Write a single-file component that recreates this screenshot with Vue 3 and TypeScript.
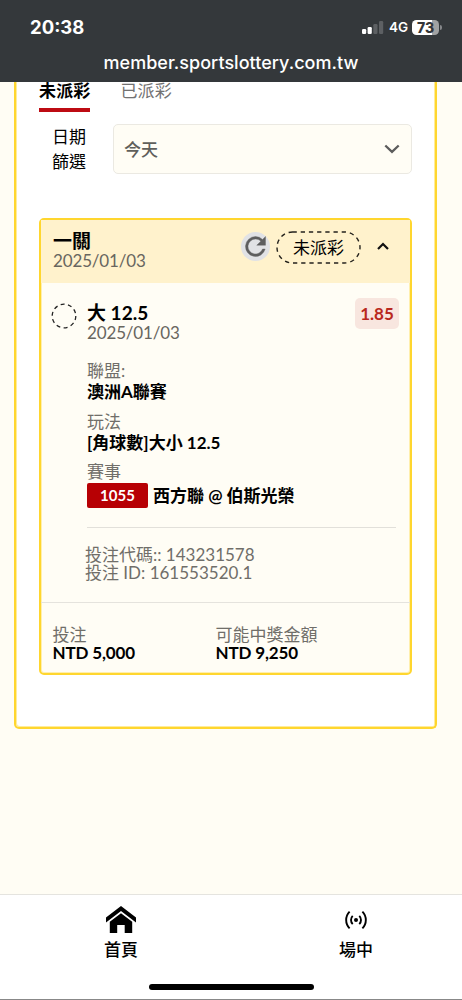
<script setup lang="ts">
interface Field {
  label: string
  value: string
  tag?: string
}

const tabs = ['未派彩', '已派彩']
const fields: Field[] = [
  { label: '聯盟:', value: '澳洲A聯賽' },
  { label: '玩法', value: '[角球數]大小 12.5' },
  { label: '賽事', value: '西方聯 @ 伯斯光榮', tag: '1055' },
]
const totals: Field[] = [
  { label: '投注', value: 'NTD 5,000' },
  { label: '可能中獎金額', value: 'NTD 9,250' },
]
</script>

<template>
  <div class="screen">
    <header class="browser">
      <div class="status">
        <span class="clock">20:38</span>
        <div class="indicators">
          <svg class="signal" width="22" height="13" viewBox="0 0 22 13">
            <rect x="0" y="8" width="4.2" height="5" rx="1.2" fill="#fff" />
            <rect x="5.6" y="6" width="4.2" height="7" rx="1.2" fill="#fff" />
            <rect x="11.3" y="3" width="4.2" height="10" rx="1.2" fill="#5d6063" />
            <rect x="17" y="0" width="4.2" height="13" rx="1.2" fill="#5d6063" />
          </svg>
          <span class="network">4G</span>
          <div class="battery"><span>73</span></div>
          <i class="battery-tip"></i>
        </div>
      </div>
      <div class="address">member.sportslottery.com.tw</div>
    </header>

    <main class="page">
      <section class="panel">
        <nav class="tabs">
          <span v-for="(tab, i) in tabs" :key="tab" class="tab" :class="{ active: i === 0 }">{{ tab }}</span>
        </nav>

        <div class="filter">
          <label class="filter-label">日期<br />篩選</label>
          <div class="select">
            <span>今天</span>
            <svg width="16" height="10" viewBox="0 0 16 10">
              <path d="M1.3 1.5 8 7.9l6.7-6.4" fill="none" stroke="#5c5c5c" stroke-width="2.3" />
            </svg>
          </div>
        </div>

        <article class="ticket">
          <div class="ticket-head">
            <div class="ticket-name">
              <strong>一關</strong>
              <span>2025/01/03</span>
            </div>
            <div class="refresh">
              <svg width="29" height="29" viewBox="0.4 0.4 23.2 23.2">
                <path d="M17.65 6.35A7.96 7.96 0 0 0 12 4a8 8 0 1 0 7.73 10h-2.08A6 6 0 1 1 12 6c1.66 0 3.14.69 4.22 1.78L13 11h7V4z" fill="#5e5e5f" stroke="#5e5e5f" stroke-width=".3" />
              </svg>
            </div>
            <div class="pill">
              <svg width="85" height="33" viewBox="0 0 85 33">
                <rect x="1" y="1" width="83" height="31" rx="15.5" fill="none" stroke="#24221c" stroke-width="1.4" stroke-dasharray="4.3 3.9" />
              </svg>
              <span>未派彩</span>
            </div>
            <svg class="collapse" width="12" height="8" viewBox="0 0 12 8">
              <path d="M1 7 6 2l5 5" fill="none" stroke="#111" stroke-width="2.2" />
            </svg>
          </div>

          <div class="bet">
            <svg class="pending" width="26" height="26" viewBox="0 0 26 26">
              <circle cx="13" cy="13" r="11.8" fill="none" stroke="#222" stroke-width="1.3" stroke-dasharray="4 3.41" />
            </svg>
            <div class="bet-body">
              <div class="bet-top">
                <div class="selection">
                  <strong>大 12.5</strong>
                  <span>2025/01/03</span>
                </div>
                <span class="odds">1.85</span>
              </div>
              <dl class="fields">
                <div v-for="field in fields" :key="field.label" class="field">
                  <dt>{{ field.label }}</dt>
                  <dd :class="{ tagged: field.tag }"><span v-if="field.tag" class="tag">{{ field.tag }}</span>{{ field.value }}</dd>
                </div>
              </dl>
              <div class="codes">
                <div>投注代碼:: 143231578</div>
                <div>投注 ID: 161553520.1</div>
              </div>
            </div>
          </div>

          <footer class="totals">
            <div v-for="total in totals" :key="total.label" class="total">
              <span>{{ total.label }}</span>
              <strong>{{ total.value }}</strong>
            </div>
          </footer>
        </article>
      </section>
    </main>

    <nav class="dock">
      <div class="dock-items">
        <div class="dock-item">
          <svg width="32" height="28" viewBox="0 0 32 28">
            <path d="M1 11.5 16 0l15 11.5v5L16 5 1 16.5z" fill="#000" />
            <path d="M4.8 15.8 16 7.3l11.2 8.5V27h-7.5v-8h-7.5v8H4.8z" fill="#000" />
          </svg>
          <span>首頁</span>
        </div>
        <div class="dock-item">
          <svg width="24" height="28" viewBox="0 0 24 28">
            <circle cx="12" cy="14" r="2" />
            <path d="M8.7 9.9a5.8 5.8 0 0 0 0 8.2M15.3 9.9a5.8 5.8 0 0 1 0 8.2M5.6 5.6a12 12 0 0 0 0 16.8M18.4 5.6a12 12 0 0 1 0 16.8" fill="none" stroke="#000" stroke-width="1.9" />
          </svg>
          <span>場中</span>
        </div>
      </div>
      <div class="home-bar"></div>
    </nav>
  </div>
</template>

<style>
body {
  margin: 0;
}
</style>

<style scoped>
.screen {
  box-sizing: border-box;
  width: 462px;
  height: 1000px;
  display: flex;
  flex-direction: column;
  overflow: hidden;
  background: #fffdf4;
  font-family: Lato, "Noto Sans CJK TC", sans-serif;
  font-size: 17px;
  color: #000;
}
.screen * {
  box-sizing: border-box;
}
svg {
  display: block;
  flex: none;
}

.browser {
  flex: none;
  height: 82px;
  background: #34383b;
  color: #fff;
  font-family: Inter, sans-serif;
}
.status {
  display: flex;
  justify-content: space-between;
  height: 51px;
  padding: 16px 20px 0 30px;
}
.clock {
  font-size: 18.5px;
  line-height: 22px;
  font-weight: 700;
}
.indicators {
  display: flex;
  height: 22px;
  align-items: center;
}
.network {
  margin-left: 5px;
  width: 20px;
  font-size: 13.5px;
  font-weight: 600;
}
.battery {
  margin-left: 3px;
  width: 27px;
  height: 15px;
  border-radius: 4.5px;
  background: linear-gradient(90deg, #fff 73%, #a0a1a2 73%);
  color: #343639;
  font-size: 14px;
  line-height: 15px;
  font-weight: 800;
  text-align: center;
}
.battery-tip {
  width: 2px;
  height: 5px;
  margin-left: 1px;
  border-radius: 0 2px 2px 0;
  background: #85878a;
}
.address {
  text-align: center;
  font-size: 18px;
  letter-spacing: 0.03px;
  line-height: 24px;
  font-weight: 500;
}

.page {
  flex: 1;
  padding: 0 25px 0 14px;
}
.panel {
  height: 647px;
  padding: 0 23px;
  border: 2px solid #ffd62e;
  border-top: 0;
  border-radius: 0 0 5px 5px;
  background: #fff;
  box-shadow: inset 1px -1px #ffec9b, inset -1px 0 #ffec9b;
}
.tabs {
  display: flex;
  gap: 30px;
  height: 30px;
}
.tab {
  height: 30px;
  line-height: 18px;
  letter-spacing: 0.15px;
  color: #727272;
}
.tab.active {
  border-bottom: 4px solid #bd0b13;
  color: #000;
  font-weight: 700;
}
.filter {
  display: flex;
  margin-top: 12px;
  height: 50px;
}
.filter-label {
  width: 47px;
  margin-right: 27px;
  text-align: right;
  line-height: 25px;
}
.select {
  display: flex;
  align-items: center;
  justify-content: space-between;
  flex: 1;
  padding: 0 11px 0 10px;
  border: 1.5px solid #ebe9e2;
  border-radius: 5px;
  background: #fffdf5;
  color: #5f5f5b;
  font-weight: 500;
}
.select span {
  padding-bottom: 2px;
}

.ticket {
  display: flex;
  flex-direction: column;
  height: 457px;
  margin-top: 44px;
  border: 2px solid #ffd62e;
  border-radius: 5px;
  background: #fffdf5;
  box-shadow: inset 0 0 0 1px #ffefad;
}
.ticket-head {
  display: flex;
  align-items: flex-start;
  flex: none;
  height: 63px;
  padding: 0 21px 0 12px;
  background: #fff2cc;
}
.ticket-name {
  display: flex;
  flex-direction: column;
  width: 188px;
  padding-top: 10px;
}
.ticket-name strong,
.selection strong {
  font-size: 19px;
  line-height: 21px;
  font-weight: 700;
}
.ticket-name span,
.selection span {
  line-height: 20px;
  letter-spacing: -0.15px;
  color: #68665f;
}
.refresh {
  display: flex;
  align-items: center;
  justify-content: center;
  width: 29px;
  height: 29px;
  margin-top: 12px;
  border-radius: 50%;
  background: #e1e2e5;
}
.pill {
  display: grid;
  margin: 11px 0 0 6px;
}
.pill > * {
  grid-area: 1 / 1;
}
.pill span {
  text-align: center;
  line-height: 34px;
}
.collapse {
  margin: 22px 0 0 16px;
}

.bet {
  display: flex;
  flex: none;
  height: 319px;
  padding: 17px 11px 0 10px;
}
.pending {
  margin: 3px 10px 0 0;
}
.bet-body {
  flex: 1;
}
.bet-top {
  display: flex;
  justify-content: space-between;
}
.selection {
  display: flex;
  flex-direction: column;
  padding-top: 2px;
}
.odds {
  width: 44px;
  height: 31px;
  margin-top: -2px;
  border-radius: 5px;
  background: #f8e6df;
  color: #b92820;
  font-size: 17px;
  line-height: 32px;
  font-weight: 700;
  text-align: center;
}
.fields {
  height: 185px;
  margin: 0 3px 0 0;
  padding-top: 17px;
  border-bottom: 1px solid #e2e0da;
}
.field {
  height: 50.5px;
}
.field dt {
  line-height: 21px;
  color: #706e69;
}
.field dd {
  display: flex;
  align-items: center;
  height: 22px;
  margin: 0;
  line-height: 22px;
  font-weight: 700;
}
.field dd.tagged {
  height: 27px;
}
.tag {
  width: 61px;
  height: 25px;
  margin-right: 5px;
  border-radius: 2px;
  background: #b70004;
  color: #fff;
  font-size: 15px;
  line-height: 25px;
  text-align: center;
}
.codes {
  margin: 18px 0 0 -2px;
  line-height: 18px;
  color: #706e69;
}
.totals {
  display: flex;
  flex: 1;
  padding: 23px 12px 0 11.5px;
  border-top: 1px solid #e5e3dd;
}
.total {
  display: flex;
  flex-direction: column;
  width: 163px;
  line-height: 18px;
}
.total span {
  color: #706e69;
}
.total strong {
  letter-spacing: -0.15px;
}

.dock {
  display: flex;
  flex-direction: column;
  align-items: center;
  flex: none;
  height: 106px;
  border-top: 1px solid #e5e4df;
  border-bottom: 1px solid #888;
  background: #fff;
}
.dock-items {
  display: flex;
  justify-content: space-between;
  width: 270px;
  height: 89px;
  margin-left: 15px;
  padding-top: 11px;
}
.dock-item {
  display: flex;
  flex-direction: column;
  align-items: center;
  width: 35px;
  font-weight: 500;
}
.dock-item span {
  margin-top: 4px;
  line-height: 24px;
}
.home-bar {
  width: 165px;
  height: 6px;
  border-radius: 3px;
  background: #000;
}
</style>
